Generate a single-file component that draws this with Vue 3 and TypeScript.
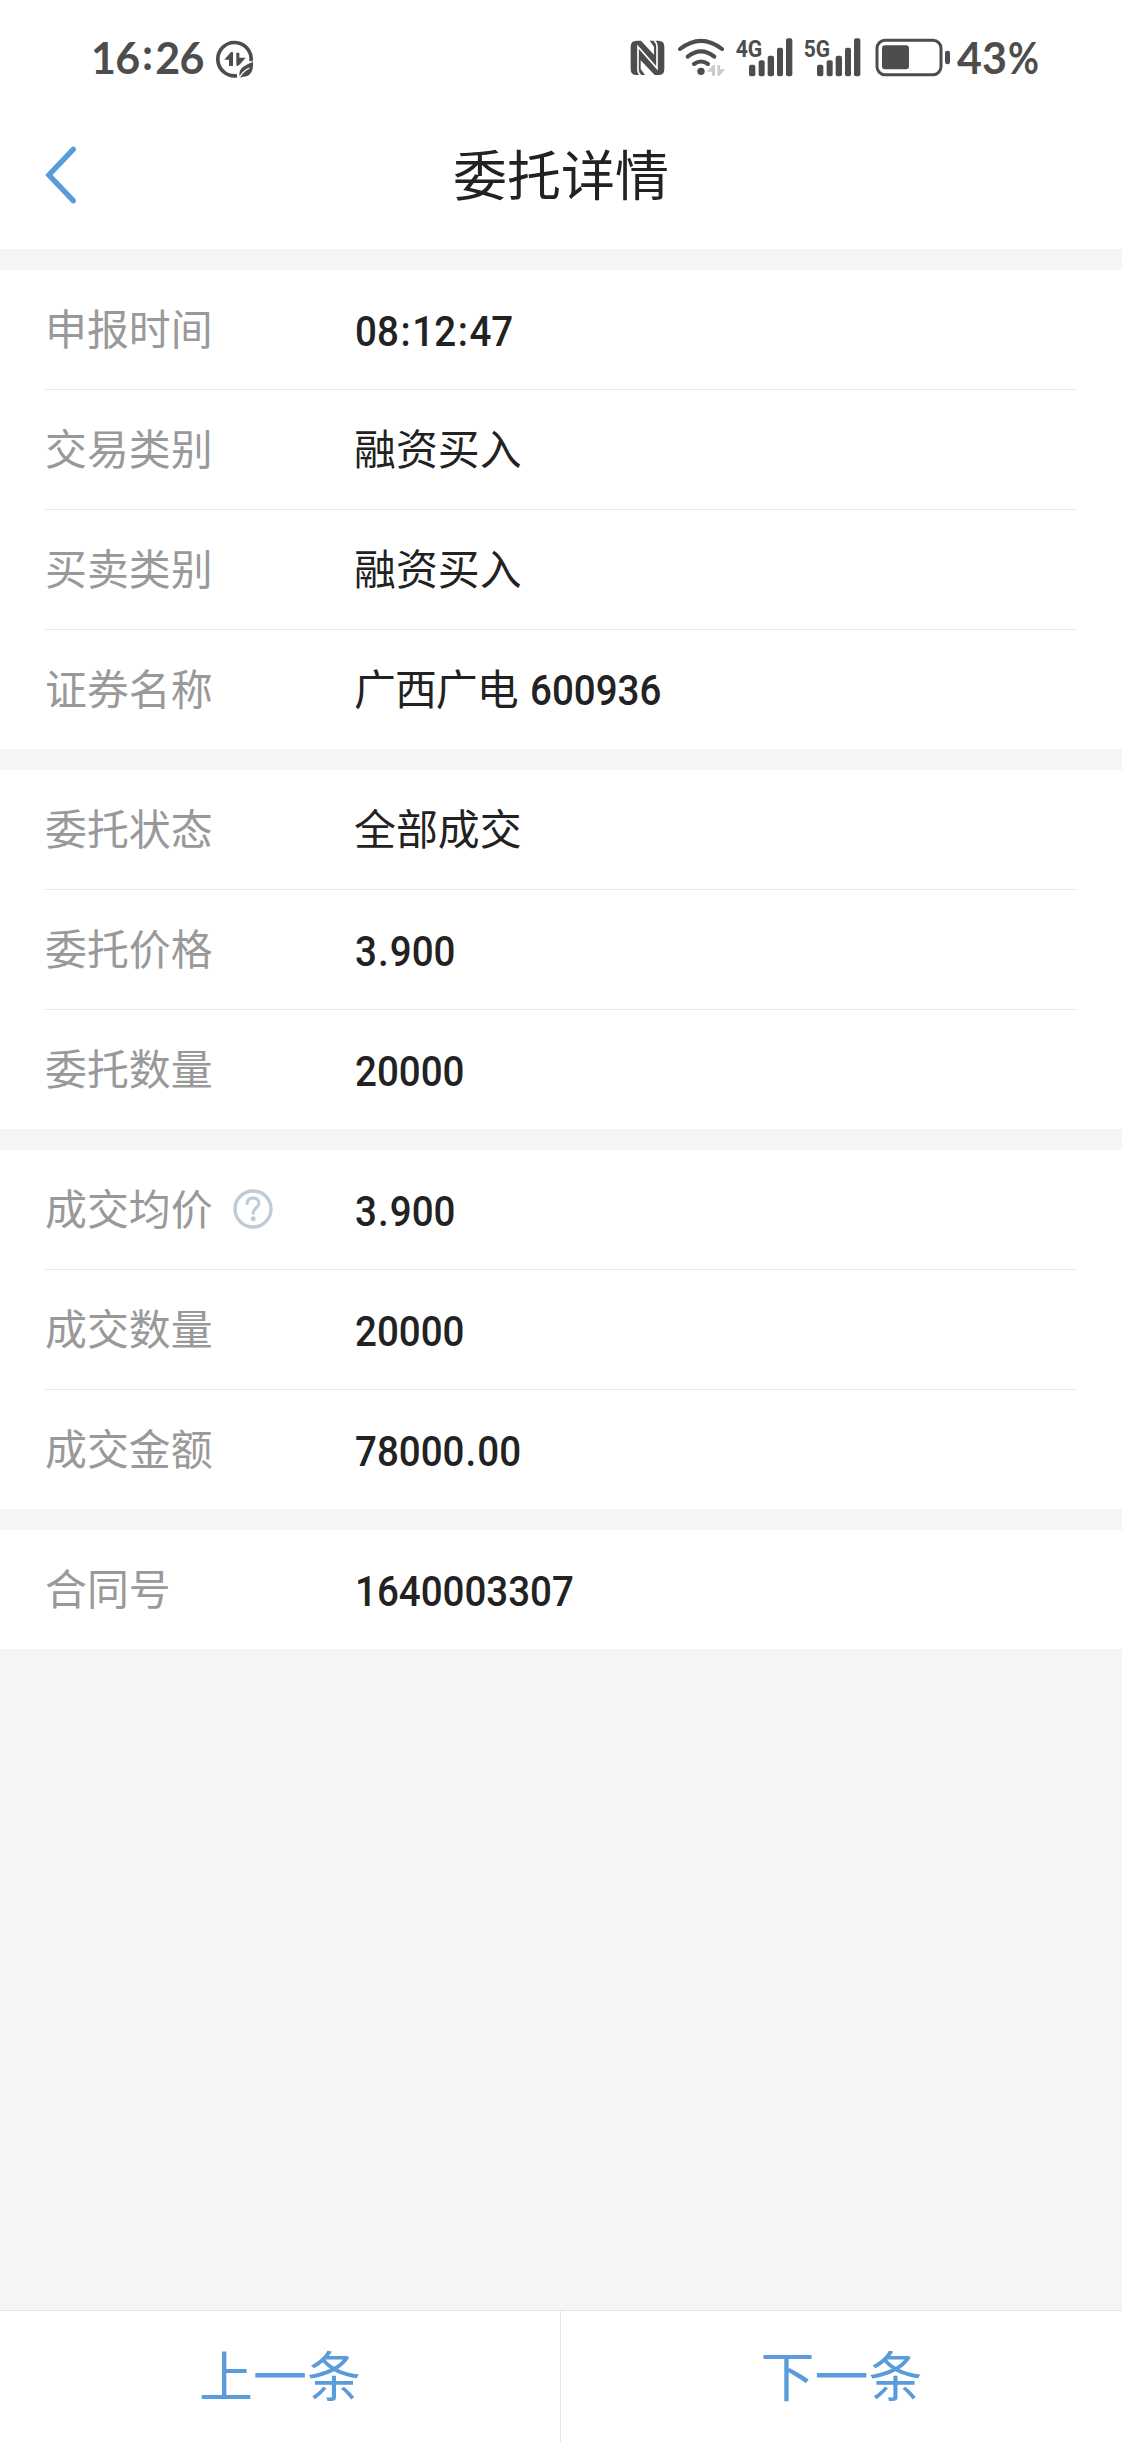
<script setup lang="ts">
interface Row {
  label: string
  text?: string
  num?: string
  help?: boolean
}

const sections: Row[][] = [
  [
    { label: '申报时间', num: '08:12:47' },
    { label: '交易类别', text: '融资买入' },
    { label: '买卖类别', text: '融资买入' },
    { label: '证券名称', text: '广西广电', num: '600936' },
  ],
  [
    { label: '委托状态', text: '全部成交' },
    { label: '委托价格', num: '3.900' },
    { label: '委托数量', num: '20000' },
  ],
  [
    { label: '成交均价', num: '3.900', help: true },
    { label: '成交数量', num: '20000' },
    { label: '成交金额', num: '78000.00' },
  ],
  [{ label: '合同号', num: '1640003307' }],
]

// Keeps ":" and "." apart from the digits so they can be spaced on their own.
const parts = (value: string): string[] => value.split(/([:.])/)
</script>

<template>
  <div class="screen">
    <header class="top">
      <div class="status">
        <div class="status-left">
          <span class="clock">16<span class="clock-colon">:</span>26</span>
          <svg class="saver" viewBox="435 45 120 132" width="40" height="44">
            <path d="M543 124A50 50 0 1 0 501 167" fill="none" stroke="#4d4d4d" stroke-width="11" />
            <path d="M463 119L482 97Q488 92 489 99V138H477V119Z" fill="#4d4d4d" />
            <path d="M499 98H508V113H527L510 133Q499 143 499 134Z" fill="#4d4d4d" />
            <path d="M549 126C551 154 541 170 520 170L510 173C502 146 521 137 549 126Z" fill="#4d4d4d" />
            <path d="M508 173Q519 153 538 144" fill="none" stroke="#fff" stroke-width="4" />
          </svg>
        </div>
        <svg viewBox="60 45 105 132" width="35" height="44">
          <path d="M80 62H93L132 104V80L119 62H146Q163 62 163 80V147Q163 165 146 165H134L92 121V147L105 165H80Q62 165 62 147V80Q62 62 80 62Z" fill="#4d4d4d" />
          <path d="M92 165Q84 160 84 149V80L141 145V80Q141 69 133 62" fill="none" stroke="#fff" stroke-width="5" />
        </svg>
        <svg class="wifi" viewBox="201 45 147 132" width="49" height="44">
          <g fill="none" stroke="#4d4d4d" stroke-width="12" stroke-linecap="round">
            <path d="M210 87Q273 38 336 87" />
            <path d="M233 110Q273 78 313 110" />
            <path d="M252 132Q273 117 294 132" />
          </g>
          <circle cx="273" cy="154" r="11" fill="#4d4d4d" />
          <path d="M291 155L309 135H315V167H306V155ZM322 135H330V148H345L329 167H322Z" fill="#ccc" />
        </svg>
        <svg class="sig4" viewBox="375 45 174 132" width="58" height="44">
          <text x="377" y="110" font-size="73" textLength="80" lengthAdjust="spacingAndGlyphs">4G</text>
          <g fill="#4d4d4d">
            <rect x="417" y="134" width="19" height="35" rx="6" />
            <rect x="446" y="121" width="18" height="48" rx="6" />
            <rect x="473" y="107" width="19" height="62" rx="6" />
            <rect x="501" y="83" width="18" height="86" rx="6" />
            <rect x="528" y="55" width="19" height="114" rx="6" />
          </g>
        </svg>
        <svg class="sig5" viewBox="579 45 174 132" width="58" height="44">
          <text x="581" y="110" font-size="73" textLength="79" lengthAdjust="spacingAndGlyphs">5G</text>
          <g fill="#4d4d4d">
            <rect x="621" y="134" width="19" height="35" rx="6" />
            <rect x="650" y="121" width="18" height="48" rx="6" />
            <rect x="677" y="107" width="19" height="62" rx="6" />
            <rect x="705" y="83" width="18" height="86" rx="6" />
            <rect x="732" y="55" width="19" height="114" rx="6" />
          </g>
        </svg>
        <svg class="battery" viewBox="75 45 228 132" width="76" height="44">
          <rect x="81" y="61" width="192" height="103" rx="24" fill="none" stroke="#4d4d4d" stroke-width="9" />
          <rect x="96" y="76" width="81" height="72" rx="9" fill="#4d4d4d" />
          <rect x="285" y="92" width="15" height="41" rx="7" fill="#4d4d4d" />
        </svg>
        <span class="percent">43<span class="percent-sign">%</span></span>
      </div>

      <div class="nav">
        <svg class="back" viewBox="0 0 40 64" width="40" height="64">
          <path d="M29.200 6.300L4.900 32L29.200 57.700" fill="none" stroke="#5a9bdb" stroke-width="5.400" stroke-linecap="round" stroke-linejoin="miter" />
        </svg>
        <h1 class="title">委托详情</h1>
      </div>
    </header>

    <main class="sections">
      <section v-for="(rows, s) in sections" :key="s" class="section">
        <div v-for="row in rows" :key="row.label" class="row">
          <div class="label">
            <span class="cjk">{{ row.label }}</span>
            <svg v-if="row.help" class="help" viewBox="0 0 40 40" width="40" height="40">
              <circle cx="20" cy="20" r="18" fill="none" stroke="#bfcbd9" stroke-width="3.400" />
              <path d="M14 14.500C14.500 10.500 17 9 20 9C23.500 9 26 11 26 14.300C26 18.500 20.200 19 20.200 24.300" fill="none" stroke="#bfcbd9" stroke-width="3.200" stroke-linecap="round" />
              <circle cx="20.200" cy="29.700" r="2.500" fill="#bfcbd9" />
            </svg>
          </div>
          <div class="value">
            <span v-if="row.text" class="cjk" :class="{ name: row.num }">{{ row.text }}</span>
            <span v-if="row.num" class="num"><span v-for="(part, i) in parts(row.num)" :key="i" :class="{ colon: part === ':', point: part === '.' }">{{ part }}</span></span>
          </div>
        </div>
      </section>
    </main>

    <footer class="pager">
      <button class="page-btn" type="button"><span class="page-text">上一条</span></button>
      <button class="page-btn" type="button"><span class="page-text">下一条</span></button>
    </footer>
  </div>
</template>

<style>
body {
  margin: 0;
  background: #f5f5f5;
}
</style>

<style scoped>
.screen {
  box-sizing: border-box;
  width: 1122px;
  height: 2442px;
  display: flex;
  flex-direction: column;
  background: #f5f5f5;
  font-family: "Noto Sans CJK SC", sans-serif;
  overflow: hidden;
}
svg {
  display: block;
  flex: none;
}
.top {
  height: 249px;
  background: #fff;
}
.status {
  height: 114px;
  display: flex;
  align-items: center;
  color: #4d4d4d;
}
.status-left {
  box-sizing: border-box;
  width: 630px;
  padding-left: 91px;
  display: flex;
  align-items: center;
}
.clock,
.percent {
  padding-top: 2px;
  font-family: Lato, sans-serif;
  font-weight: 700;
  font-size: 43px;
  line-height: 44px;
  white-space: nowrap;
}
.clock {
  width: 124px;
  letter-spacing: -0.700px;
}
.clock-colon {
  display: inline-block;
  margin: 0 3px 0 2.500px;
  transform: translateY(-4px);
}
.percent {
  margin-left: 6px;
}
.percent-sign {
  display: inline-block;
  margin-left: 1px;
  transform: scaleX(0.88);
  transform-origin: left center;
}
.wifi {
  margin-left: 12px;
}
.sig4 {
  margin-left: 9px;
}
.sig5 {
  margin-left: 10px;
}
.battery {
  margin-left: 14px;
}
.status text {
  font-family: Roboto, sans-serif;
  font-weight: 700;
  fill: #4d4d4d;
}
.nav {
  height: 121px;
  display: grid;
  grid-template-columns: 140px 1fr 140px;
  align-items: center;
}
.back {
  margin-left: 44px;
}
.title {
  margin: 0;
  padding-bottom: 4px;
  text-align: center;
  font-weight: 400;
  font-size: 54px;
  line-height: 80px;
  color: #222;
}
.sections {
  flex: 1;
  padding-top: 21px;
  display: flex;
  flex-direction: column;
  gap: 21px;
}
.section {
  padding: 0 45px;
  background: #fff;
}
.row {
  height: 119px;
  display: flex;
  align-items: center;
}
.row + .row {
  border-top: 1px solid #e8e8e8;
}
.label {
  width: 309px;
  display: flex;
  align-items: center;
  color: #999;
}
.value {
  display: flex;
  align-items: center;
  color: #222;
}
.cjk {
  padding-bottom: 5px;
  font-size: 41.900px;
  line-height: 60px;
  white-space: nowrap;
}
.name {
  letter-spacing: -1px;
}
.help {
  margin-left: 20.500px;
  margin-bottom: 1px;
}
.num {
  margin-left: 1px;
  padding-top: 4px;
  font-family: Roboto, sans-serif;
  font-weight: 500;
  font-size: 42px;
  line-height: 60px;
  white-space: nowrap;
  transform: scaleX(0.917);
  transform-origin: left center;
}
.name + .num {
  margin-left: 12px;
  padding-top: 2px;
}
.colon {
  margin: 0 1.800px;
}
.point {
  margin: 0 1.200px;
}
.pager {
  height: 131px;
  border-top: 1px solid #e5e5e5;
  display: flex;
  background: #fff;
}
.page-btn {
  box-sizing: border-box;
  flex: 0 0 561px;
  padding: 0 0 5px;
  border: 0;
  background: none;
  display: flex;
  align-items: center;
  justify-content: center;
  font-family: inherit;
  color: #5a9bdb;
}
.page-btn:first-child {
  border-right: 1px solid #e5e5e5;
}
.page-text {
  font-size: 54px;
  line-height: 80px;
}
</style>
